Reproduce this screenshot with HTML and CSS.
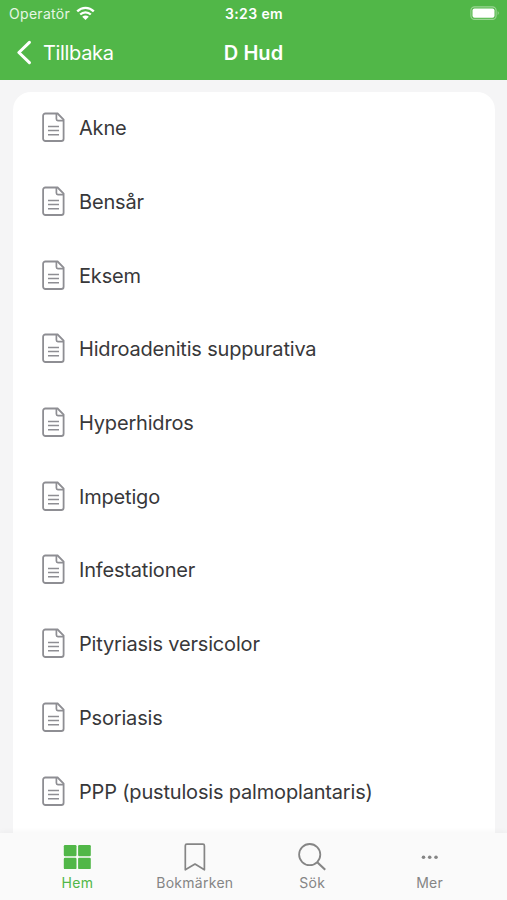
FILE: index.html
```html
<!DOCTYPE html>
<html lang="sv">
<head>
<meta charset="utf-8">
<title>D Hud</title>
<link rel="stylesheet" href="styles.css">
</head>
<body>
<svg class="defs" width="0" height="0" aria-hidden="true">
  <symbol id="doc" viewBox="0 0 24 31">
    <path d="M4.4 1.5H16.6L22.6 7.5V26.7A2.3 2.3 0 0 1 20.3 29H4.4A2.3 2.3 0 0 1 2.1 26.7V3.8A2.3 2.3 0 0 1 4.4 1.5Z" stroke-width="1.8"/>
    <path d="M15.4 1.8V7.1A1.5 1.5 0 0 0 16.9 8.6H22.4" stroke-width="1.7"/>
    <path d="M7 14.5H18M7 18.6H18M7 22.7H18" stroke-width="1.5"/>
  </symbol>
</svg>
<div class="app">
  <header class="header">
    <div class="status">
      <div class="carrier"><span>Operatör</span>
        <svg class="wifi" width="19" height="15" viewBox="0 0 19 15">
          <path d="M1.2 5.4C6 .7 13 .7 17.8 5.4M4.2 8.5C7.2 5.6 11.8 5.6 14.8 8.5" fill="none" stroke="#fff" stroke-width="2.3"/>
          <path d="M6.2 10.8C8.1 9 10.9 9 12.8 10.8L9.5 14Z" fill="#fff"/>
        </svg>
      </div>
      <span class="time">3:23 em</span>
      <svg class="battery" width="31" height="15" viewBox="0 0 31 15">
        <rect x=".9" y=".9" width="25.2" height="12.5" rx="3.7" fill="none" stroke="#9bd594" stroke-width="1.1"/>
        <rect x="2.5" y="2.5" width="22" height="9.3" rx="2" fill="#fff"/>
        <path d="M27.7 5.1Q29.8 7.1 27.7 9.2Z" fill="#9bd594"/>
      </svg>
    </div>
    <nav class="navbar">
      <div class="back">
        <svg width="16" height="26" viewBox="0 0 16 26"><path d="M14.4 2.3L3.9 12.5L14.4 22.7" fill="none" stroke="#fff" stroke-width="3" stroke-linecap="round" stroke-linejoin="round"/></svg>
        <span>Tillbaka</span>
      </div>
      <h1>D Hud</h1>
    </nav>
  </header>
  <main class="content">
    <ul class="list">
      <li><svg class="doc"><use href="#doc"/></svg><span>Akne</span></li>
      <li><svg class="doc"><use href="#doc"/></svg><span>Bensår</span></li>
      <li><svg class="doc"><use href="#doc"/></svg><span>Eksem</span></li>
      <li><svg class="doc"><use href="#doc"/></svg><span>Hidroadenitis suppurativa</span></li>
      <li><svg class="doc"><use href="#doc"/></svg><span>Hyperhidros</span></li>
      <li><svg class="doc"><use href="#doc"/></svg><span>Impetigo</span></li>
      <li><svg class="doc"><use href="#doc"/></svg><span>Infestationer</span></li>
      <li><svg class="doc"><use href="#doc"/></svg><span>Pityriasis versicolor</span></li>
      <li><svg class="doc"><use href="#doc"/></svg><span>Psoriasis</span></li>
      <li><svg class="doc"><use href="#doc"/></svg><span>PPP (pustulosis palmoplantaris)</span></li>
    </ul>
  </main>
  <footer class="tabs">
    <div class="tab active">
      <svg width="32" height="32" viewBox="0 0 32 32" fill="currentColor"><rect x="2.8" y="4" width="12.7" height="11.3" rx="1.2"/><rect x="17.1" y="4" width="12.7" height="11.3" rx="1.2"/><rect x="2.8" y="16.8" width="12.7" height="11.3" rx="1.2"/><rect x="17.1" y="16.8" width="12.7" height="11.3" rx="1.2"/></svg>
      <span>Hem</span>
    </div>
    <div class="tab">
      <svg width="32" height="32" viewBox="0 0 32 32" fill="none" stroke="currentColor" stroke-width="1.7" stroke-linejoin="round"><path d="M7.8 3.2H23.9Q25.4 3.2 25.4 4.7V28.8L16 23L6.3 28.8V4.7Q6.3 3.2 7.8 3.2Z"/></svg>
      <span>Bokmärken</span>
    </div>
    <div class="tab">
      <svg width="32" height="32" viewBox="0 0 32 32" fill="none" stroke="currentColor" stroke-width="1.8"><circle cx="13.7" cy="13.6" r="10.6"/><path d="M21 21L29.2 28.8" stroke-width="2.1"/></svg>
      <span>Sök</span>
    </div>
    <div class="tab">
      <svg width="32" height="32" viewBox="0 0 32 32" fill="currentColor"><circle cx="9.5" cy="16.2" r="1.8"/><circle cx="15.7" cy="16.2" r="1.8"/><circle cx="22" cy="16.2" r="1.8"/></svg>
      <span>Mer</span>
    </div>
  </footer>
</div>
</body>
</html>
```
FILE: styles.css
```css
* { box-sizing: border-box; }
body {
  margin: 0;
  font-family: Inter, "Liberation Sans", sans-serif;
  color: #38383a;
  background: #f5f5f6;
}
.defs { display: block; }
.app {
  display: flex;
  flex-direction: column;
  width: 507px;
  height: 900px;
  overflow: hidden;
}
.header {
  flex: none;
  height: 79.5px;
  background: #51b748;
  color: #fff;
}
.status, .navbar {
  display: grid;
  align-items: center;
}
.status {
  grid-template-columns: 1fr auto 1fr;
  height: 27px;
  padding: 0 8px 0 9px;
  font-size: 14px;
}
.carrier { display: flex; align-items: center; gap: 6px; letter-spacing: .3px; color: #e6f6e4; }
.wifi { margin-bottom: 1px; }
.time { font-weight: 600; letter-spacing: .4px; }
.battery { justify-self: end; margin-right: -2px; }
.navbar {
  grid-template-columns: 1fr auto 1fr;
  height: 51px;
  padding: 0 15px;
}
.back { display: flex; align-items: center; gap: 12px; font-size: 20px; letter-spacing: -.35px; }
.back svg { flex: none; }
h1 { margin: 0; font-size: 20px; font-weight: 600; letter-spacing: .05px; }
.content {
  flex: 1;
  min-height: 0;
  padding: 12px 12.5px 0 13px;
  overflow: hidden;
}
.list {
  margin: 0;
  padding: 0;
  list-style: none;
  height: 770px;
  background: #fff;
  border-radius: 18px;
}
.list li {
  display: flex;
  align-items: center;
  gap: 14px;
  height: 73.7px;
  padding-left: 28px;
  font-size: 20px;
  letter-spacing: -.18px;
}
.list li span { white-space: nowrap; }
.doc {
  flex: none;
  width: 24px;
  height: 31px;
  margin-bottom: 1px;
  fill: none;
  stroke: #8e8e93;
}
.tabs {
  position: relative;
  flex: none;
  display: grid;
  grid-template-columns: repeat(4, 117.4px);
  justify-content: center;
  height: 67px;
  padding-top: 8px;
  background: #fafafa;
  box-shadow: 0 -1px 6px rgba(0, 0, 0, .04);
}
.tab {
  display: flex;
  flex-direction: column;
  align-items: center;
  gap: 1px;
  color: #858585;
  font-size: 14px;
  line-height: 18px;
  letter-spacing: .28px;
}
.active { color: #51b748; }
```
